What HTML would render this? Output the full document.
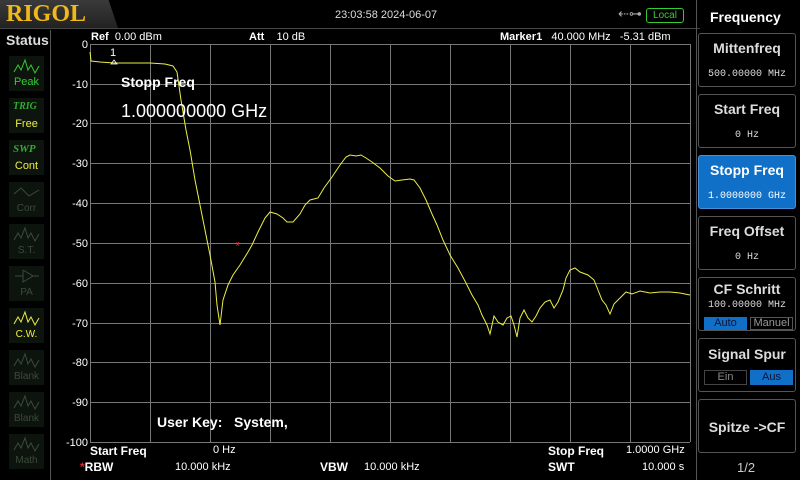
<!DOCTYPE html>
<html><head><meta charset="utf-8"><style>
*{margin:0;padding:0;box-sizing:border-box}
body{width:800px;height:480px;background:#000;font-family:"Liberation Sans",sans-serif;color:#fff;position:relative;overflow:hidden}
.a{position:absolute;white-space:nowrap}
.ic{position:absolute;left:9px;width:35px;height:35px;background:#0d140d;text-align:center;font-size:10px;color:#3c4a3c}
.ic .t{position:absolute;left:0;right:0;bottom:3px}
.btn{position:absolute;left:698px;width:98px;border:1px solid #555;border-radius:3px;background:#000;text-align:center;color:#ddd}
.btn .h{font-weight:bold;font-size:14px}
.btn .v{font-family:"Liberation Mono",monospace;font-size:10px}
</style></head><body>
<div class="a" style="left:0;top:0;width:118px;height:28px;background:linear-gradient(#3a3a3a,#222);clip-path:polygon(0 0,92% 0,100% 100%,0 100%)"></div>
<div class="a" style="left:6px;top:1px;font-family:'Liberation Serif',serif;font-weight:bold;font-size:24px;color:#f0b818">RIGOL</div>
<div class="a" style="left:0;top:28px;width:700px;height:1px;background:#444"></div>
<div class="a" style="left:335px;top:9px;font-size:11px;color:#ddd">23:03:58 2024-06-07</div>
<div class="a" style="left:618px;top:6px;font-size:13px;color:#aaa">⇠⊶</div>
<div class="a" style="left:646px;top:8px;width:38px;height:15px;border:1px solid #3c3;border-radius:3px;font-size:10px;color:#3c3;text-align:center;line-height:13px">Local</div>
<div class="a" style="left:6px;top:32px;font-size:14px;font-weight:bold;color:#ddd">Status</div>
<div class="a" style="left:50px;top:30px;width:1px;height:450px;background:#555"></div>
<div class="a" style="left:696px;top:0;width:1px;height:480px;background:#555"></div>
<div class="ic" style="top:56px;color:#3c3"><svg width="35" height="20"><polyline points="5,16 9,9 12,14 16,4 19,14 22,9 26,17 30,10" fill="none" stroke="#3c3"/></svg><div class="t" style="font-size:11px">Peak</div></div>
<div class="ic" style="top:98px"><div class="a" style="left:4px;top:3px;font-family:'Liberation Serif',serif;font-style:italic;font-weight:bold;color:#3a3">TRIG</div><div class="t" style="font-size:11px;color:#ee4">Free</div></div>
<div class="ic" style="top:140px"><div class="a" style="left:4px;top:3px;font-family:'Liberation Serif',serif;font-style:italic;font-weight:bold;color:#3a3;font-size:11px">SWP</div><div class="t" style="font-size:11px;color:#ee4">Cont</div></div>
<div class="ic" style="top:182px"><svg width="35" height="20"><polyline points="5,12 12,6 20,14 30,8" fill="none" stroke="#3c4a3c"/></svg><div class="t">Corr</div></div>
<div class="ic" style="top:224px"><svg width="35" height="20"><polyline points="5,16 9,9 12,14 16,4 19,14 22,9 26,17 30,10" fill="none" stroke="#3c4a3c"/></svg><div class="t">S.T.</div></div>
<div class="ic" style="top:266px"><svg width="35" height="20"><path d="M6,10H14M14,4V16L24,10L14,4M24,10H30" fill="none" stroke="#3c4a3c"/></svg><div class="t">PA</div></div>
<div class="ic" style="top:308px;color:#ee4"><svg width="35" height="20"><polyline points="5,16 9,9 12,14 16,4 19,14 22,9 26,17 30,10" fill="none" stroke="#ee4"/></svg><div class="t">C.W.</div></div>
<div class="ic" style="top:350px"><svg width="35" height="20"><polyline points="5,16 9,9 12,14 16,4 19,14 22,9 26,17 30,10" fill="none" stroke="#3c4a3c"/></svg><div class="t">Blank</div></div>
<div class="ic" style="top:392px"><svg width="35" height="20"><polyline points="5,16 9,9 12,14 16,4 19,14 22,9 26,17 30,10" fill="none" stroke="#3c4a3c"/></svg><div class="t">Blank</div></div>
<div class="ic" style="top:434px"><svg width="35" height="20"><polyline points="5,16 9,9 12,14 16,4 19,14 22,9 26,17 30,10" fill="none" stroke="#3c4a3c"/></svg><div class="t">Math</div></div>
<div class="a" style="left:91px;top:31px;font-size:11px"><b>Ref</b>&nbsp; 0.00 dBm</div>
<div class="a" style="left:249px;top:31px;font-size:11px"><b>Att</b>&nbsp;&nbsp;&nbsp; 10 dB</div>
<div class="a" style="left:500px;top:31px;font-size:11px"><b>Marker1</b>&nbsp;&nbsp; 40.000 MHz&nbsp;&nbsp; -5.31 dBm</div>
<svg class="a" style="left:0;top:0" width="700" height="480">
<g stroke="#777" stroke-width="1">
<line x1="90.5" y1="44" x2="90.5" y2="442"/><line x1="150.5" y1="44" x2="150.5" y2="442"/><line x1="210.5" y1="44" x2="210.5" y2="442"/><line x1="270.5" y1="44" x2="270.5" y2="442"/><line x1="330.5" y1="44" x2="330.5" y2="442"/><line x1="390.5" y1="44" x2="390.5" y2="442"/><line x1="450.5" y1="44" x2="450.5" y2="442"/><line x1="510.5" y1="44" x2="510.5" y2="442"/><line x1="570.5" y1="44" x2="570.5" y2="442"/><line x1="630.5" y1="44" x2="630.5" y2="442"/><line x1="690.5" y1="44" x2="690.5" y2="442"/>
<line x1="90" y1="44.5" x2="690" y2="44.5"/><line x1="90" y1="84.5" x2="690" y2="84.5"/><line x1="90" y1="123.5" x2="690" y2="123.5"/><line x1="90" y1="163.5" x2="690" y2="163.5"/><line x1="90" y1="203.5" x2="690" y2="203.5"/><line x1="90" y1="243.5" x2="690" y2="243.5"/><line x1="90" y1="283.5" x2="690" y2="283.5"/><line x1="90" y1="323.5" x2="690" y2="323.5"/><line x1="90" y1="362.5" x2="690" y2="362.5"/><line x1="90" y1="402.5" x2="690" y2="402.5"/><line x1="90" y1="442.5" x2="690" y2="442.5"/>
</g>
<g fill="#fff" font-size="11" text-anchor="end" font-family="Liberation Sans">
<text x="88" y="48">0</text><text x="88" y="88">-10</text><text x="88" y="127">-20</text><text x="88" y="167">-30</text><text x="88" y="207">-40</text><text x="88" y="247">-50</text><text x="88" y="287">-60</text><text x="88" y="327">-70</text><text x="88" y="366">-80</text><text x="88" y="406">-90</text><text x="88" y="446">-100</text>
</g>
<polyline fill="none" stroke="#ee4" stroke-width="1" points="90,52 91,61 100,62 114,63 130,63 150,63 165,64 173,66 177,72 181,100 186,130 190,150 195,180 200,205 205,230 210,255 215,282 217,305 220,325 223,300 228,285 233,275 240,265 248,252 252,245 258,232 265,218 270,212 277,214 283,218 287,222 293,222 300,214 305,205 310,200 318,198 324,188 332,177 340,165 346,157 350,155 356,156 361,155 366,158 372,162 380,168 388,176 395,181 402,180 410,179 414,180 420,188 426,200 432,214 437,225 443,240 450,255 458,268 466,283 472,295 478,305 482,315 487,325 490,334 494,316 498,322 503,325 507,318 511,316 514,325 517,337 520,318 524,310 528,318 532,322 536,316 540,308 545,302 550,300 554,308 558,302 563,290 566,278 570,270 575,268 580,272 588,275 594,280 598,290 602,300 606,305 610,314 614,304 618,300 622,296 626,292 632,294 640,291 650,293 660,292 670,292 680,293 690,295"/>
<text x="110" y="56" fill="#fff" font-size="11" font-family="Liberation Sans">1</text>
<path d="M114,60l3,4h-6z" fill="none" stroke="#fff" stroke-width=".8"/>
<text x="236" y="246" fill="#f33" font-size="7">x</text>
</svg>
<div class="a" style="left:121px;top:74px;font-size:14px;font-weight:bold">Stopp Freq</div>
<div class="a" style="left:121px;top:101px;font-size:18px">1.000000000 GHz</div>
<div class="a" style="left:157px;top:414px;font-size:14px;font-weight:bold">User Key:&nbsp;&nbsp; System,</div>
<div class="a" style="left:90px;top:444px;font-size:12px;font-weight:bold">Start Freq</div>
<div class="a" style="left:213px;top:444px;font-size:11px">0 Hz</div>
<div class="a" style="left:548px;top:444px;font-size:12px;font-weight:bold">Stop Freq</div>
<div class="a" style="left:626px;top:444px;font-size:11px">1.0000 GHz</div>
<div class="a" style="left:80px;top:460px;font-size:12px;font-weight:bold"><span style="color:#e22">*</span>RBW</div>
<div class="a" style="left:175px;top:461px;font-size:11px">10.000 kHz</div>
<div class="a" style="left:320px;top:460px;font-size:12px;font-weight:bold">VBW</div>
<div class="a" style="left:364px;top:461px;font-size:11px">10.000 kHz</div>
<div class="a" style="left:548px;top:460px;font-size:12px;font-weight:bold">SWT</div>
<div class="a" style="left:642px;top:461px;font-size:11px">10.000 s</div>
<div class="a" style="left:710px;top:9px;font-size:14px;font-weight:bold">Frequency</div>
<div class="btn" style="top:33px;height:54px"><div class="h" style="margin-top:6px">Mittenfreq</div><div class="v" style="margin-top:13px">500.00000 MHz</div></div>
<div class="btn" style="top:94px;height:54px"><div class="h" style="margin-top:6px">Start Freq</div><div class="v" style="margin-top:13px">0 Hz</div></div>
<div class="btn" style="top:155px;height:54px;background:#1070c8;color:#fff;border-color:#4a90d8"><div class="h" style="margin-top:6px">Stopp Freq</div><div class="v" style="margin-top:13px">1.0000000 GHz</div></div>
<div class="btn" style="top:216px;height:54px"><div class="h" style="margin-top:6px">Freq Offset</div><div class="v" style="margin-top:13px">0 Hz</div></div>
<div class="btn" style="top:277px;height:54px"><div class="h" style="margin-top:3px">CF Schritt</div><div class="v" style="margin-top:3px">100.00000 MHz</div>
<div class="a" style="left:5px;top:39px;width:43px;height:13px;background:#1070c8;font-size:11px;line-height:13px;color:#113">Auto</div>
<div class="a" style="left:51px;top:39px;width:43px;height:13px;border:1px solid #555;font-size:11px;line-height:11px;color:#999">Manuel</div></div>
<div class="btn" style="top:338px;height:54px"><div class="h" style="margin-top:7px">Signal Spur</div>
<div class="a" style="left:5px;top:31px;width:43px;height:15px;border:1px solid #444;font-size:11px;line-height:13px;color:#888">Ein</div>
<div class="a" style="left:51px;top:31px;width:43px;height:15px;background:#1070c8;font-size:11px;line-height:15px;color:#113">Aus</div></div>
<div class="btn" style="top:399px;height:54px"><div class="h" style="margin-top:19px">Spitze -&gt;CF</div></div>
<div class="a" style="left:737px;top:460px;font-size:13px;color:#ccc">1/2</div>
</body></html>
